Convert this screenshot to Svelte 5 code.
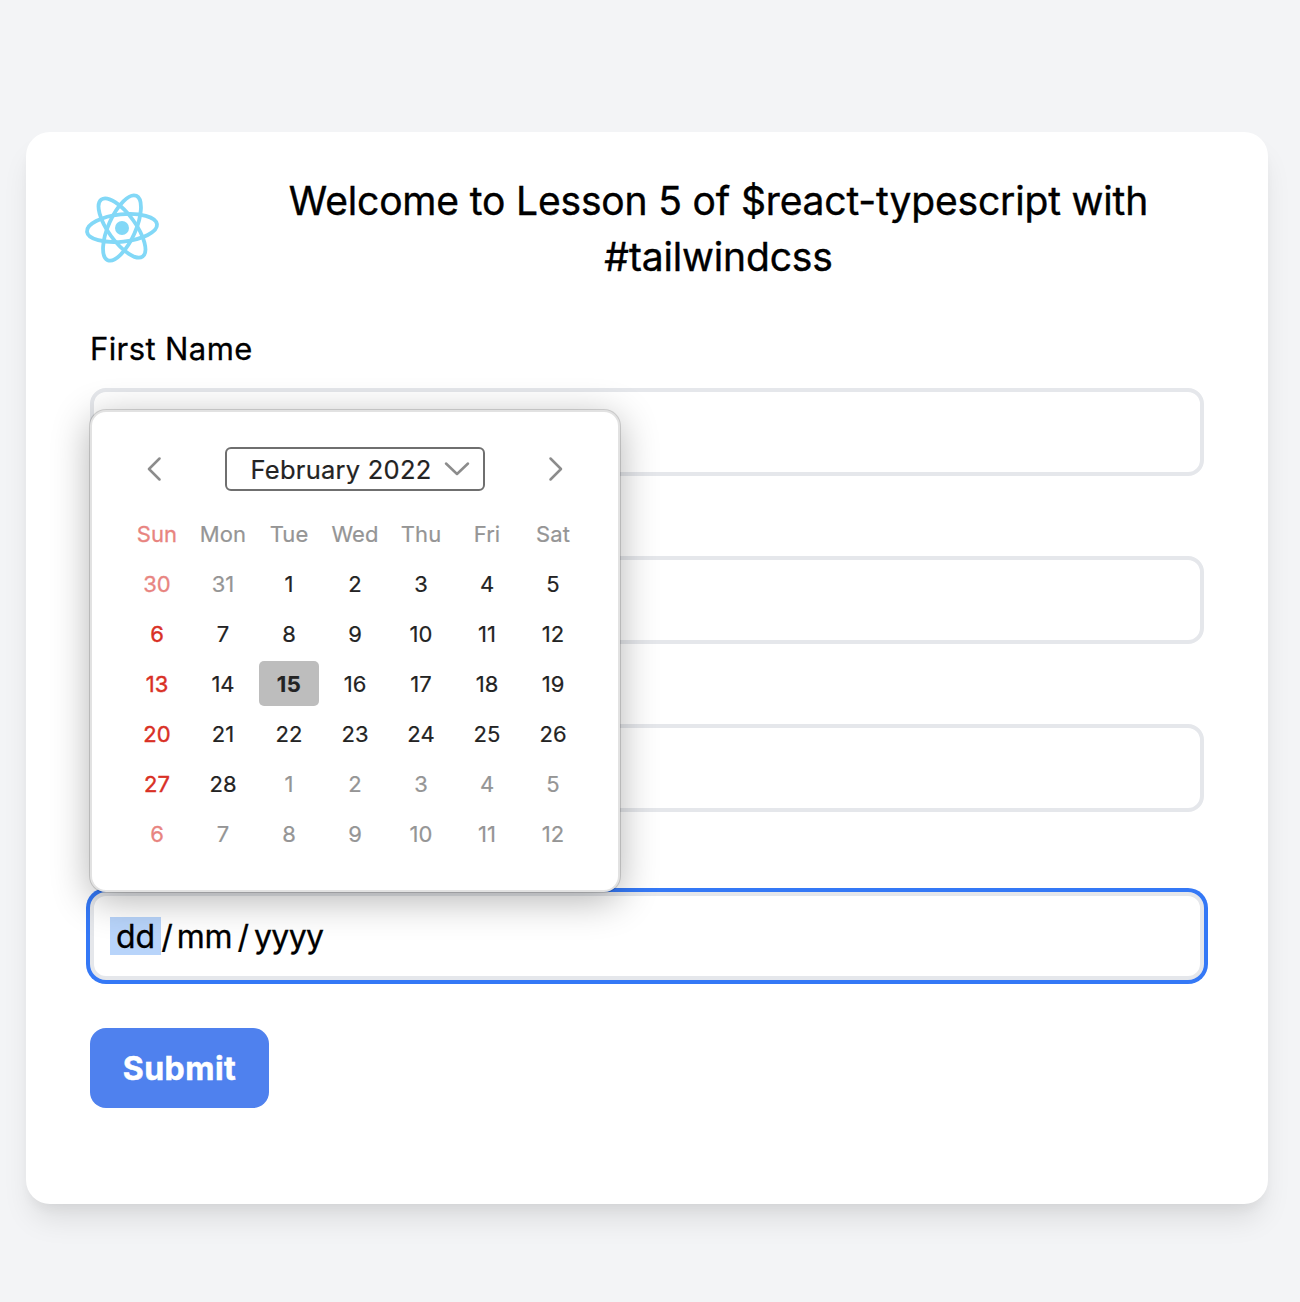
<script>
  const weekdays = ['Sun', 'Mon', 'Tue', 'Wed', 'Thu', 'Fri', 'Sat'];
  const fillerFields = [1, 2];

  // 42 cells starting on Sunday 30 January 2022
  const days = Array.from({ length: 42 }, (_, i) => {
    const date = new Date(2022, 0, 30 + i);
    return {
      day: date.getDate(),
      outside: date.getMonth() !== 1,
      sunday: i % 7 === 0,
      today: date.getMonth() === 1 && date.getDate() === 15
    };
  });
</script>

<main>
  <section class="card">
    <header>
      <svg class="logo" viewBox="-40 -40 80 80" width="80" height="80" aria-hidden="true">
        <g transform="rotate(-6)" fill="none" stroke="#82d8f7" stroke-width="3.8">
          <ellipse rx="35.2" ry="13.6" />
          <ellipse rx="35.2" ry="13.6" transform="rotate(60)" />
          <ellipse rx="35.2" ry="13.6" transform="rotate(-60)" />
        </g>
        <circle r="7" fill="#82d8f7" />
      </svg>
      <h1>Welcome to Lesson 5 of $react-typescript with #tailwindcss</h1>
    </header>

    <form>
      <label for="first">First Name</label>
      <input id="first" type="text" />
      {#each fillerFields as f (f)}
        <input type="text" />
      {/each}

      <div class="date">
        <span class="part active">dd</span><span class="slash">/</span><span class="part mm">mm</span><span class="slash">/</span><span class="part yyyy">yyyy</span>

        <div class="calendar">
          <div class="nav">
            <svg width="16" height="26" viewBox="0 0 16 26"><path d="M14.500 2.500 4 13l10.500 10.500" /></svg>
            <div class="month">
              <span>February 2022</span>
              <svg width="26" height="16" viewBox="0 0 26 16"><path d="M2 2.500 13 13 24 2.500" /></svg>
            </div>
            <svg width="16" height="26" viewBox="0 0 16 26"><path d="M2.500 2.500 13 13l-10.500 10.500" /></svg>
          </div>
          <div class="grid">
            {#each weekdays as name, i (name)}
              <span class="weekday" class:sunday={i === 0}>{name}</span>
            {/each}
            {#each days as d, i (i)}
              <span class="day" class:sunday={d.sunday} class:outside={d.outside} class:today={d.today}>{d.day}</span>
            {/each}
          </div>
        </div>
      </div>

      <button type="button">Submit</button>
    </form>
  </section>
</main>

<style>
  :global(body) {
    background: #f3f4f6;
  }
  main {
    box-sizing: border-box;
    height: 1302px;
    padding: 132px 32px 98px 26px;
    font-family: Inter, 'Liberation Sans', sans-serif;
    font-size: 32px;
    color: #000;
    overflow: hidden;
  }
  .card {
    box-sizing: border-box;
    height: 1072px;
    padding: 40px 64px 0;
    border-radius: 24px;
    background: #fff;
    box-shadow: 0 20px 30px -6px rgb(0 0 0 / 0.1), 0 8px 12px -4px rgb(0 0 0 / 0.05);
  }
  header {
    display: flex;
    align-items: center;
    height: 112px;
  }
  .logo {
    flex: none;
    margin-left: -8px;
    margin-right: 71px;
  }
  h1 {
    flex: 1;
    margin: 0;
    padding-top: 2px;
    font-size: 39px;
    line-height: 56px;
    font-weight: 400;
    text-align: center;
    letter-spacing: -0.16px;
    -webkit-text-stroke: 0.4px #000;
  }
  form {
    display: flex;
    flex-direction: column;
    padding-top: 41px;
  }
  label {
    height: 48px;
    line-height: 48px;
    margin-bottom: 15px;
    font-size: 31px;
    letter-spacing: 0.4px;
    -webkit-text-stroke: 0.3px #000;
  }
  input,
  .date {
    box-sizing: border-box;
    width: 100%;
    height: 88px;
    margin: 0 0 80px;
    border: 4px solid #e5e7eb;
    border-radius: 16px;
    background: #fff;
    outline: none;
  }
  .date {
    position: relative;
    display: flex;
    align-items: center;
    margin-bottom: 48px;
    padding: 0 16px;
    box-shadow: 0 0 0 4px #3478f6;
    white-space: nowrap;
  }
  .part,
  .slash {
    height: 38px;
    line-height: 39px;
    -webkit-text-stroke: 0.3px #000;
  }
  .active {
    padding: 0 6px;
    background: #b8d4fa;
  }
  .mm {
    margin: 0 5px 0 4px;
    letter-spacing: -0.2px;
  }
  .yyyy {
    margin-left: 5px;
    letter-spacing: -0.6px;
  }
  button {
    align-self: flex-start;
    width: 179px;
    height: 80px;
    padding: 0;
    border: 0;
    border-radius: 16px;
    background: #4f81ee;
    color: #fff;
    font: inherit;
    font-weight: 700;
    letter-spacing: 0.5px;
    -webkit-text-stroke: 0.5px #fff;
  }
  .calendar {
    position: absolute;
    left: -4px;
    bottom: 84px;
    box-sizing: border-box;
    width: 530px;
    height: 482px;
    padding: 35px 30px 0 32px;
    border: 2px solid #e2e2e2;
    border-radius: 16px;
    background: #fff;
    box-shadow: 0 0 0 1px rgb(0 0 0 / 0.15), 0 8px 38px rgb(0 0 0 / 0.3);
    color: #232323;
  }
  .nav {
    display: flex;
    align-items: center;
    justify-content: space-between;
    padding: 0 24px 0 21px;
  }
  svg path {
    fill: none;
    stroke: #8c8c8c;
    stroke-width: 2.5;
    stroke-linecap: round;
    stroke-linejoin: round;
  }
  .month {
    box-sizing: border-box;
    display: flex;
    align-items: center;
    justify-content: space-between;
    width: 260px;
    height: 44px;
    padding: 0 13px 0 24px;
    border: 2px solid #6f6f6f;
    border-radius: 6px;
    font-size: 25.5px;
    letter-spacing: 0.25px;
    -webkit-text-stroke: 0.2px #232323;
  }
  .grid {
    display: grid;
    grid-template-columns: repeat(7, 66px);
    grid-auto-rows: 50px;
    margin-top: 18px;
    font-size: 22px;
  }
  .weekday,
  .day {
    display: flex;
    align-items: center;
    justify-content: center;
    -webkit-text-stroke: 0.2px currentColor;
  }
  .weekday {
    color: #959595;
    letter-spacing: 0.1px;
  }
  .outside {
    color: #959595;
  }
  .day.sunday {
    color: #d93025;
    -webkit-text-stroke-width: 0.4px;
  }
  .weekday.sunday,
  .day.sunday.outside {
    color: #e88480;
    -webkit-text-stroke-width: 0.3px;
  }
  .today {
    margin: 2px 3px 3px;
    border-radius: 5px;
    background: #bdbdbd;
    font-weight: 700;
    letter-spacing: 0.6px;
  }
</style>
